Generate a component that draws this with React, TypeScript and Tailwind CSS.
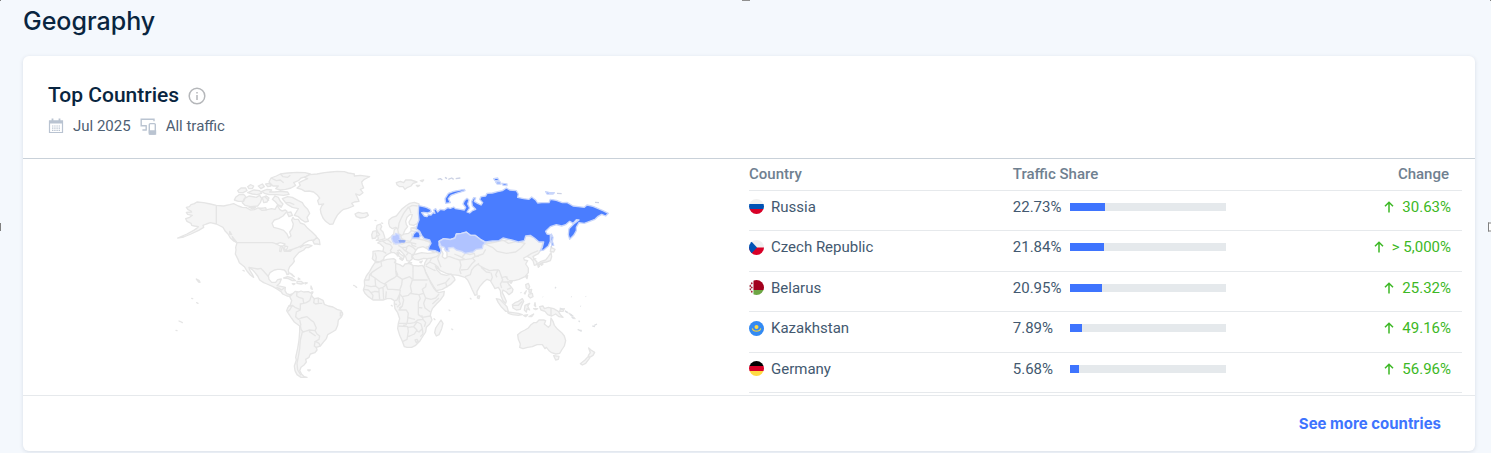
import React from "react";

const LAND = "#f5f5f5";
const BORDER = "#e5e5e5";

type Shape = {
  d: string;
  fill?: string;
  stroke?: string;
};

type Region = {
  name: string;
  transform: string;
  shapes: Shape[];
};

const regions: Region[] = [
  {
    name: "north-america",
    transform: "translate(0 0)",
    shapes: [
      // mainland
      {
        d: "M138 136L120 132 100 128 80 126 72 131 62 134 57 140 48 142 53 149 62 153 64 156 48 157 52 163 66 166 58 172 46 176 50 184 62 190 64 196 72 198 84 200 78 206 70 211 50 222 36 228 22 234 40 231 62 222 85 211 100 202 98 196 108 192 120 188 138 192 150 198 158 202 165 214 173 222 180 234 190 243 200 248 196 262 197 270 195 282 203 298 207 308 222 320 230 333 240 345 250 352 246 343 238 330 236 322 246 329 254 338 262 348 268 360 280 368 290 372 308 380 322 388 332 395 337 402 350 408 358 409 366 402 358 404 349 401 344 392 345 382 332 379 320 377 328 370 333 357 322 359 316 367 304 367 296 358 294 348 299 338 312 330 322 328 330 328 342 330 347 336 350 344 356 342 354 330 358 320 366 312 372 304 370 296 378 286 386 277 400 270 407 262 414 263 425 257 412 254 400 256 390 262 400 250 415 242 430 240 441 237 437 228 425 216 412 205 402 193 390 189 384 178 372 178 368 172 364 180 369 192 366 205 358 216 362 228 355 234 350 222 340 211 325 206 310 202 305 190 312 180 325 176 338 168 350 154 345 150 335 153 328 148 321 136 314 148 304 146 290 149 276 145 262 144 252 149 240 150 228 143 216 142 204 138 190 131 178 134 160 138Z",
      },
      { d: "M138 136V192M200 248H306L326 254 338 262 342 274 354 272 366 268 382 262 396 256M236 322L262 327 272 325 282 336 290 345 296 352", fill: "none" },
      { d: "M318 252L330 248 344 252 340 257 330 258ZM330 260L336 259 332 275 328 274ZM344 258L352 260 348 271 343 268ZM346 274L366 268 360 274Z", fill: "#ffffff" },
      // arctic islands
      {
        d: "M196 112L206 104 220 103 226 110 220 124 204 124 192 120ZM222 116L236 108 258 112 268 106 274 116 270 128 262 138 240 140 224 136 216 128ZM202 92L212 84 226 84 230 92 218 98 206 98ZM232 80L240 74 250 78 246 86 236 86ZM232 98L250 90 268 92 274 100 260 104 246 102ZM264 78L276 72 282 80 272 86ZM274 94L290 88 304 90 298 96 312 96 330 94 352 96 356 103 340 106 318 104 296 104 282 100ZM286 72L298 70 302 78 292 80ZM276 112L288 108 296 114 290 126 280 128ZM296 66L302 54 318 48 330 42 352 39 380 37 404 38 420 42 408 50 392 54 384 62 370 68 376 76 362 84 346 88 330 90 316 86 324 78 308 78ZM306 118L314 108 324 112 330 124 338 132 332 142 322 134 316 126ZM336 116L352 110 366 112 384 122 396 128 402 138 412 148 418 160 410 172 414 184 404 186 392 178 384 170 372 166 378 156 384 146 366 142 352 134 344 126ZM350 158L362 156 366 166 356 170ZM236 142L256 142 248 147ZM268 146L286 143 288 150 274 151Z",
      },
      { d: "M302 54L318 62 330 60 340 68M330 42L338 50 352 52 360 46M322 134L334 140M284 110L296 122M344 128L358 128 372 134", fill: "none" },
      { d: "M428 244L440 232 447 240 449 254 440 252 432 252ZM178 214L184 224 178 222ZM186 230L198 246 190 242Z" },
      // caribbean
      {
        d: "M340 354L352 350 366 354 376 362 366 362 354 356ZM380 364L392 364 400 370 392 372 380 370ZM366 371L374 371 370 374ZM404 368L411 369 405 372ZM358 339L364 342 372 350 366 346ZM384 354L389 357 384 358ZM422 378L426 388 422 386ZM424 396L428 396 426 400Z",
      },
      // pacific islands
      { d: "M78 357L86 361 89 367 85 366ZM64 415L67 416ZM79 428L83 430ZM26 483L30 485ZM33 486L36 488ZM17 511L20 512ZM218 331L222 333Z" },
      // greenland
      {
        d: "M380 84L390 76 386 68 398 62 412 56 402 52 418 44 440 42 462 38 482 36 500 34 522 35 534 39 552 42 552 48 570 46 598 50 590 54 582 58 574 66 576 74 580 84 570 88 578 98 568 106 556 102 562 114 566 124 552 126 544 130 550 138 532 145 520 148 512 154 502 164 494 178 488 192 478 193 466 184 458 174 452 160 450 148 454 138 460 132 446 134 442 122 448 114 440 104 430 96 416 93 404 94 394 88Z",
      },
    ],
  },
  {
    name: "south-america",
    transform: "translate(0 300)",
    shapes: [
      {
        d: "M358 110L366 102 375 94 385 96 392 93 400 96 414 95 424 100 424 108 432 116 444 114 458 121 462 133 474 138 488 141 500 148 512 152 517 160 514 170 504 180 502 196 496 210 486 216 472 224 468 236 458 248 450 258 438 262 440 270 434 278 420 282 416 292 406 298 408 306 402 314 392 322 388 332 394 343 402 350 410 352 392 352 380 344 374 332 372 318 378 300 376 292 382 265 386 240 388 215 388 198 372 186 362 172 354 160 349 152 353 142 360 134 364 122Z",
      },
      {
        d: "M380 95L379 108 386 112 398 116 400 130 390 132 390 148M424 104L418 122 408 128 400 130M432 116L430 128 436 132 446 130 456 130M444 114L444 128M354 138L366 136 374 142 388 148 390 150 378 156 376 170 384 178 392 174M366 136L358 150 352 154M392 174L410 170 424 182 430 186 438 204 434 212 418 210 404 214 398 216 392 208 390 196M388 180L392 196M434 212L440 222 448 228 446 238 432 246M416 214L436 228M436 244L446 250 450 258M434 246L432 258 438 262M396 216L390 240 388 266 384 290 380 310 382 330 392 346M400 348V352",
        fill: "none",
      },
      { d: "M344 82L334 90 322 84M330 86L318 82M412 330L420 330 416 333Z", fill: "none" },
    ],
  },
  {
    name: "eurasia",
    transform: "translate(0 0)",
    shapes: [
      {
        d: "M608 274L624 272 638 274 640 262 630 252 622 249 628 245 640 242 652 238 662 230 670 222 672 208 680 204 686 208 684 218 695 223 715 220 722 214 722 204 742 200 760 235 840 235 945 240 1000 242 1066 226 1092 232 1106 246 1118 248 1110 272 1104 281 1094 286 1088 290 1092 298 1100 306 1099 314 1092 316 1088 302 1080 294 1070 289 1060 294 1062 300 1072 302 1066 312 1074 324 1074 338 1064 350 1046 358 1032 362 1018 362 1012 368 1020 378 1028 388 1026 396 1016 404 1008 396 998 390 996 398 1002 410 1008 424 1006 430 998 422 992 408 990 392 984 382 974 386 966 372 960 362 950 358 940 366 928 380 920 394 920 404 914 406 906 390 898 372 892 360 884 352 864 346 846 344 828 340 810 332 795 318 800 330 812 342 828 346 842 342 852 354 854 360 840 374 816 388 798 392 790 380 778 360 766 336 760 322 764 308 771 296 760 295 745 300 732 298 726 290 724 284 738 282 754 278 772 280 794 278 774 268 758 260 742 264 736 272 730 284 724 290 726 296 718 304 710 302 706 290 696 278 688 270 682 272 690 282 702 290 698 298 690 292 680 284 672 278 662 278 650 284 642 290 640 298 628 306 614 304 606 296 608 286Z",
      },
      // scandinavia
      {
        d: "M655 190L656 180 666 172 678 168 686 158 694 148 706 138 718 130 732 127 746 132 748 150 748 176 742 190 730 196 718 194 716 186 722 176 726 164 718 164 710 172 706 184 708 194 712 200 704 210 698 224 690 228 684 218 682 206 676 202 666 206 658 200Z",
      },
      { d: "M684 206L686 190 692 176 700 160 712 144 726 136M722 160L718 146 712 140M726 136L742 138", fill: "none" },
      // britain, iceland, svalbard
      {
        d: "M620 196L630 192 634 200 630 208 638 216 642 228 644 236 630 240 618 241 624 236 622 228 628 224 622 216 618 206ZM604 224L608 214 618 212 620 224 616 234 606 236ZM554 162L564 157 578 160 590 158 594 166 584 172 570 174 558 170ZM678 68L690 64 700 68 706 60 722 60 740 66 728 70 722 78 712 82 704 88 698 80 688 80 680 74ZM738 76L748 76 742 80ZM750 62L760 60 756 65ZM614 181L617 182ZM634 189L637 190ZM680 278L684 278 684 286 681 288ZM688 296L698 297 696 301ZM714 308L724 308 720 311ZM748 306L756 303 752 309Z",
      },
      // internal borders, europe
      {
        d: "M636 242L646 250 660 254 666 262 660 272 664 278M638 274L648 280M614 278L618 292 616 304M648 236L658 244 664 250M690 222L694 236 706 242 720 244 726 234 724 220M668 252L682 250 696 252 706 248 722 248 738 252M694 262L708 262 716 256 728 262 736 270M684 256L694 262 704 272M704 272L714 278 722 282M710 262L706 274M714 278L708 286M724 236L738 236 760 240 778 246 782 258 766 262M722 248L726 256 738 260M726 204L744 208M722 212L740 216",
        fill: "none",
      },
      // internal borders, middle east and asia
      {
        d: "M771 296L784 294 798 290 808 282 796 276M784 294L778 306 766 316M778 306L792 312 802 320 808 330M808 282L802 296 808 312 812 322M766 318L790 330 796 332M800 376L826 368 838 354M826 368L830 382M838 290L854 296 868 300 872 316 868 330 872 342M868 300L888 298 904 296 914 290M852 282L870 290 884 298M826 290L840 290M872 330L892 328 904 312 914 302 908 296M884 350L900 344 904 330 912 320 926 310M876 290L886 280 898 284 912 280 914 290 926 288M922 312L930 318 944 326 958 332 972 330 986 330M932 322L948 336 960 338M962 338L966 352 962 362M984 328L976 344 980 352M986 330L992 346 996 358M996 352L1006 350 1014 360M996 366L1012 366 1018 378M998 358L990 372 994 384M1006 350L1012 352M944 252L966 262 980 274 1008 280 1036 276 1052 264 1064 250 1040 244 1014 250 998 240 976 246ZM1070 289L1084 280 1104 272M1088 298L1098 296M1010 388L1022 384M914 290L938 282 946 268",
        fill: "none",
      },
      { d: "M816 258L826 256 830 264 822 268 830 278 830 292 824 296 816 290 818 280 812 270Z", fill: "#ffffff" },
      // japan and east asian islands
      {
        d: "M1142 262L1154 268 1150 276 1140 274ZM1142 278L1144 290 1140 302 1128 306 1116 308 1106 314 1100 312 1112 304 1126 300 1134 290ZM1102 314L1108 318 1104 322ZM1110 312L1118 312 1114 316ZM1066 350L1072 346 1070 356ZM1018 366L1026 364 1022 370ZM922 408L928 408 926 416 921 414Z",
      },
      // indonesia and philippines
      {
        d: "M1066 374L1074 370 1078 380 1074 388 1068 384ZM1076 402L1086 400 1088 410 1080 414 1074 408ZM1076 390L1084 388 1082 398 1076 396ZM1062 400L1068 392 1064 402ZM978 416L988 418 1000 430 1010 440 1014 454 1006 454 994 442 984 428ZM1012 456L1028 458 1044 460 1056 464 1044 466 1026 464 1014 460ZM1026 434L1034 428 1044 424 1056 416 1060 424 1054 436 1050 448 1038 450 1028 444ZM1064 436L1078 430 1072 438 1078 450 1070 446 1068 456 1062 450ZM1060 466L1072 464 1066 470ZM1076 470L1090 462 1084 470ZM1094 428L1096 440 1092 436ZM1090 446L1102 446 1096 449ZM1108 440L1118 438 1122 446 1134 442 1150 446 1164 454 1170 464 1178 472 1166 470 1156 462 1144 468 1132 464 1124 454 1112 450ZM1170 448L1182 446 1178 454 1168 454ZM1186 454L1192 458ZM1196 460L1208 468 1202 466ZM1210 472L1214 476Z",
      },
      { d: "M1142 444V468M1028 436L1044 436 1056 424", fill: "none" },
    ],
  },
  {
    name: "africa",
    transform: "translate(510 210)",
    shapes: [
      {
        d: "M104 98L112 98 122 94 140 88 160 86 166 90 166 100 178 104 188 110 194 102 206 100 218 106 234 108 246 106 252 114 256 128 264 144 272 160 280 174 288 184 296 188 312 184 310 196 300 210 288 222 276 236 272 246 270 256 275 270 268 282 258 292 256 306 248 318 238 334 226 346 214 352 200 352 192 350 186 334 178 316 172 296 174 280 178 266 172 248 164 236 162 224 162 212 152 206 140 206 128 210 112 210 98 210 84 200 74 190 69 180 73 168 72 152 78 138 88 124 96 110Z",
      },
      {
        d: "M122 96L124 108 108 118 94 128 92 136 104 144 120 156 132 162 146 152 164 142M164 142L172 134 166 120 166 100M166 122L168 136 186 148 208 140 216 148M218 106L218 150 262 150M166 90L162 100M73 150H86L88 134 94 128M104 144L106 168 92 170 76 166M106 168L116 176 128 172 138 164 132 162M138 166L142 178 156 178 178 180 184 164 186 148M216 150L210 168 214 186 204 196 186 200 178 192 180 180M210 190L222 192 236 194 250 190 246 178 256 170 258 160M250 190L256 204 272 208 286 204 296 192M256 204L250 220 254 234 270 246M236 194L240 206 234 216 234 232 246 234M70 178L84 180 92 188 98 196 96 208M92 188L104 184 116 186 118 208M116 178V190M128 174L130 208M138 184L136 206M178 192L170 210 164 212M178 196L176 212 180 222 170 232M186 200L190 210 186 228 176 240 198 240 204 250 202 262 214 266 224 268M186 228L176 234M234 232L234 254 246 262 270 258M204 250L202 268 200 280 176 280M202 280H210L222 278 232 270 248 268 244 256M188 286L200 284M174 288L202 290 204 304 200 328 188 334M204 292L220 290 230 300 222 312 208 318 202 320M220 290L230 276 242 282 246 296 236 306 228 302M246 296L248 312 240 320M248 268L256 278 252 290M224 330L230 328 234 334 228 338ZM170 224L164 222M296 204L276 222",
        fill: "none",
      },
      { d: "M302 270L308 280 304 296 296 314 288 318 283 308 286 294 294 282Z" },
      { d: "M40 166L44 168ZM46 170L49 172ZM281 266L284 269ZM326 240L329 242ZM334 297L337 299ZM390 205L392 207ZM153 226L156 228ZM0 246L5 248 7 254 0 258Z" },
    ],
  },
  {
    name: "oceania",
    transform: "translate(900 240)",
    shapes: [
      {
        d: "M142 284L152 276 164 270 174 264 182 254 190 248 198 248 206 240 220 240 226 242 222 252 234 262 240 256 242 234 248 244 252 256 262 268 274 278 282 288 286 302 282 318 274 330 268 340 256 342 244 338 236 332 228 322 224 326 216 314 200 314 186 320 172 322 158 326 148 322 150 312 144 298Z",
      },
      { d: "M250 347L266 349 264 358 256 360Z" },
      { d: "M355 324L362 330 373 337 368 346 358 352 354 346 360 338ZM354 349L358 354 346 370 336 375 330 371 344 360Z" },
      { d: "M268 204L278 208M284 212L292 218M300 222L306 228M304 230L310 236M325 242L328 246M322 268L334 274M330 270L334 272M366 258L374 260M372 256L380 252M254 145L257 141M302 170L304 171M346 169L347 170M151 157L153 159M217 170L218 171M330 198L332 199", fill: "none", stroke: "#dfe1e4" },
    ],
  },
  {
    name: "russia",
    transform: "translate(840 0)",
    shapes: [
      {
        d: "M-95 137L-84 139 -72 142 -60 148 -57 155 -68 159 -80 157 -86 158 -78 168 -70 170 -66 164 -58 165 -52 158 -46 160 -50 150 -44 146 -38 156 -30 148 -18 150 -8 143 0 145 10 141 16 146 30 148 42 150 46 142 38 132 42 122 50 115 56 120 52 132 58 144 50 156 58 159 66 152 76 148 66 138 64 124 70 113 76 114 72 124 82 130 92 135 97 128 88 118 92 110 106 108 110 100 126 99 142 95 156 92 168 84 178 90 198 92 204 102 202 112 220 116 236 118 244 111 256 120 262 129 274 128 296 128 300 118 318 121 336 128 350 127 368 138 384 140 402 142 410 135 428 139 442 145 458 152 474 160 466 168 454 163 442 170 434 178 418 184 402 190 386 188 378 202 378 212 370 226 358 238 354 224 356 206 370 192 386 180 378 179 368 190 358 184 346 194 334 198 318 194 300 200 286 214 290 222 300 224 300 244 294 258 280 270 270 272 276 262 280 246 266 246 252 234 240 226 226 228 222 242 204 246 184 240 158 234 146 242 126 243 106 246 90 238 74 226 60 226 48 217 32 220 18 222 14 234 0 238 -20 236 -34 244 -34 256 -28 270 -30 279 -46 272 -66 270 -64 260 -58 250 -62 240 -78 236 -86 226 -92 214 -102 206 -98 190 -94 180 -96 160ZM-14 130L-16 116 -6 100 10 94 42 88 44 92 18 100 2 106 -6 116 0 128ZM130 56L142 54 146 62 134 62ZM136 66L150 66 152 72 140 72ZM156 70L170 72 170 77 158 76ZM286 95L298 98 312 98 308 102 290 102ZM303 222L308 232 306 244 310 256 304 256 302 240Z",
        fill: "#4a7dff",
        stroke: "#c9d6fb",
      },
      { d: "M-38 58L-30 56 -24 60M-16 52L-10 56M-6 58L4 54 10 58M16 56L30 54M320 100L334 101M434 127L446 128M302 258L304 262", fill: "none", stroke: "#ccd2e4" },
      // belarus
      { d: "M-114 234L-110 222 -102 214 -94 216 -90 228 -94 234Z", fill: "#4a7dff", stroke: "#c9d6fb" },
      // kazakhstan
      {
        d: "M-34 244L-20 236 0 239 14 234 18 222 34 220 48 216 60 226 74 226 90 238 106 248 98 256 96 266 78 268 68 276 44 280 34 274 18 270 8 262 -6 264 -4 274 -14 272 -18 262 -28 258Z",
        fill: "#b0c3ff",
        stroke: "#d2dcfb",
      },
      // germany
      { d: "M-174 226L-166 226 -164 220 -154 224 -150 238 -156 242 -150 250 -164 252 -172 246 -176 236Z", fill: "#b9c9ff", stroke: "#d2dcfb" },
      // czech republic
      { d: "M-154 242L-146 241 -136 243 -138 246 -152 246Z", fill: "#3e74fe", stroke: "#8ea9f5" },
    ],
  },
];

const WorldMap = () => (
  <svg width="450" height="225" viewBox="-28 0 1350 675" role="img" aria-label="World map">
    {regions.map((region) => (
      <g key={region.name} transform={region.transform}>
        {region.shapes.map((shape, i) => (
          <path
            key={i}
            d={shape.d}
            fill={shape.fill ?? LAND}
            stroke={shape.stroke ?? BORDER}
            strokeWidth={4}
            strokeLinejoin="round"
          />
        ))}
      </g>
    ))}
  </svg>
);

const flags: Record<string, React.ReactNode> = {
  ru: (
    <>
      <path fill="#f0f0f0" d="M0 0h15v5H0z" />
      <path fill="#0052b4" d="M0 5h15v5H0z" />
      <path fill="#d80027" d="M0 10h15v5H0z" />
    </>
  ),
  cz: (
    <>
      <path fill="#f0f0f0" d="M0 0h15v8H0z" />
      <path fill="#d80027" d="M0 7.500h15V15H0z" />
      <path fill="#0052b4" d="M0 0h1L8 7.500 1 15H0z" />
    </>
  ),
  by: (
    <>
      <path fill="#f0f0f0" d="M0 0h5v15H0z" />
      <path fill="#a2001d" d="M4.500 0H15v10H4.500z" />
      <path fill="#6da544" d="M4.500 10H15v5H4.500z" />
      <path
        fill="#a2001d"
        d="M2.800 2l.9 1.300-.9 1.300-.9-1.300zM1.200 4.600l.9 1.300-.9 1.300-.9-1.300zM2.800 6.200l.9 1.300-.9 1.300-.9-1.300zM1.200 8l.9 1.300-.9 1.300-.9-1.300zM2.800 10.400l.9 1.300-.9 1.300-.9-1.300z"
      />
    </>
  ),
  kz: (
    <>
      <path fill="#338af3" d="M0 0h15v15H0z" />
      <circle cx="7.500" cy="6" r="2" fill="#ffda44" />
      <path d="M3.300 7.300c.8 3.800 7.600 3.800 8.400 0" fill="none" stroke="#e9cd4a" strokeWidth="1.200" />
    </>
  ),
  de: (
    <>
      <path fill="#000000" d="M0 0h15v5H0z" />
      <path fill="#d80027" d="M0 5h15v5H0z" />
      <path fill="#ffda44" d="M0 10h15v5H0z" />
    </>
  ),
};

const countries = [
  { code: "ru", name: "Russia", share: 22.73, change: "30.63%" },
  { code: "cz", name: "Czech Republic", share: 21.84, change: "> 5,000%" },
  { code: "by", name: "Belarus", share: 20.95, change: "25.32%" },
  { code: "kz", name: "Kazakhstan", share: 7.89, change: "49.16%" },
  { code: "de", name: "Germany", share: 5.68, change: "56.96%" },
];

const InfoIcon = () => (
  <svg width="18" height="18" viewBox="0 0 18 18" fill="none" stroke="#b5b7ba" strokeWidth="1.500">
    <circle cx="9" cy="9" r="7.800" />
    <path d="M9 8v5M9 5v1.600" />
  </svg>
);

const CalendarIcon = () => (
  <svg width="16" height="16" viewBox="0 0 16 16" fill="none" stroke="#b9c3d1">
    <path d="M1.500 3h13v11.500h-13z" strokeWidth="1.200" />
    <path d="M1 4h14" strokeWidth="3" />
    <path d="M4.500 .5v3M11.500 .5v3" strokeWidth="1.800" />
    <path d="M4 8h8M4 10.200h8M4 12.400h8" strokeDasharray="1.400 .8" strokeWidth="1.200" />
  </svg>
);

const DevicesIcon = () => (
  <svg width="17" height="17" viewBox="0 0 17 17" fill="none" stroke="#bac4d1" strokeWidth="1.400">
    <path d="M14 3.200V1.200H1.200v6.600h5.600M2.400 12h4.400M6.200 8v4" />
    <rect x="9.300" y="5.600" width="6" height="10.500" rx="1" />
    <path d="M9.500 13h6v3h-6z" fill="#bac4d1" />
  </svg>
);

const ArrowUp = () => (
  <svg width="10" height="12" viewBox="0 0 10 12" fill="none" stroke="#3cb825" strokeWidth="1.500">
    <path d="M5 11.500V1.500M1 5.200l4-4 4 4" />
  </svg>
);

const TopCountries = () => (
  <section className="rounded-md bg-white shadow-[0_1px_4px_rgba(14,30,62,0.12)]">
    <header className="border-b border-[#c9d1d9] px-[25px] pt-[23px] pb-[22px]">
      <div className="flex items-center gap-[9px]">
        <h3 className="text-[21px] leading-8 font-medium text-[#092540]">Top Countries</h3>
        <span className="pt-0.5">
          <InfoIcon />
        </span>
      </div>
      <div className="flex h-[25px] items-end gap-[9px] text-[15px] leading-5 text-[#4e6073]">
        <span className="flex items-center gap-[9px]">
          <CalendarIcon />
          Jul 2025
        </span>
        <span className="flex items-center gap-[9px]">
          <DevicesIcon />
          All traffic
        </span>
      </div>
    </header>
    <div className="grid grid-cols-2">
      <div className="flex justify-center pt-px">
        <WorldMap />
      </div>
      <div className="pr-[13px] pb-0.5">
        <table className="h-[234px] w-full table-fixed border-collapse text-left text-[15px] leading-5 text-[#435970]">
          <thead>
            <tr className="h-[31px] border-b border-[#e6e9ec] text-[#6f8090]">
              <th className="w-[37%] font-medium">Country</th>
              <th className="w-[40%] font-medium">Traffic Share</th>
              <th className="pr-[13px] text-right font-medium">Change</th>
            </tr>
          </thead>
          <tbody>
            {countries.map((country) => (
              <tr key={country.code} className="border-b border-[#e6e9ec]">
                <td className="pb-[7px]">
                  <div className="flex items-center gap-[7px]">
                    <svg width="15" height="15" viewBox="0 0 15 15" className="rounded-full">
                      {flags[country.code]}
                    </svg>
                    {country.name}
                  </div>
                </td>
                <td className="pb-[7px]">
                  <div className="flex items-center">
                    <span className="w-[57px]">{country.share}%</span>
                    <div className="h-2 w-[156px] bg-[#e5e9ec]">
                      <div className="h-2 bg-[#3e74fe]" style={{ width: `${country.share}%` }} />
                    </div>
                  </div>
                </td>
                <td className="pr-[11px] pb-[7px]">
                  <div className="flex items-center justify-end gap-2 text-[#3cb825]">
                    <ArrowUp />
                    {country.change}
                  </div>
                </td>
              </tr>
            ))}
          </tbody>
        </table>
      </div>
    </div>
    <footer className="flex h-14 items-center justify-end border-t border-[#e6e9ec] px-[34px]">
      <a href="#countries" className="font-[Inter,sans-serif] text-[15px] leading-5 font-bold text-[#3e74fe]">
        See more countries
      </a>
    </footer>
  </section>
);

// resize grips that sit on the edges of the frame
const FrameGrips = () => (
  <>
    <span className="absolute top-0 left-0 size-px bg-[#808080]" />
    <span className="absolute top-0 left-1/2 h-px w-2 -translate-x-1/2 bg-[#909090]" />
    <span className="absolute top-0 right-0 size-px bg-[#808080]" />
    <span className="absolute top-1/2 left-0 h-2 w-px -translate-y-1/2 bg-[#808080]" />
    <span className="absolute top-1/2 right-0 h-[9px] w-[3px] -translate-y-1/2 border border-r-0 border-[#808080] bg-white" />
  </>
);

export default function App() {
  return (
    <main className="relative min-h-screen bg-[#f4f8fd] px-4 pl-[23px] font-[Roboto,sans-serif]">
      <FrameGrips />
      <h2 className="pt-[5px] pb-[19px] font-[Inter,sans-serif] text-[25px] leading-8 font-medium text-[#092540]">
        Geography
      </h2>
      <TopCountries />
    </main>
  );
}
